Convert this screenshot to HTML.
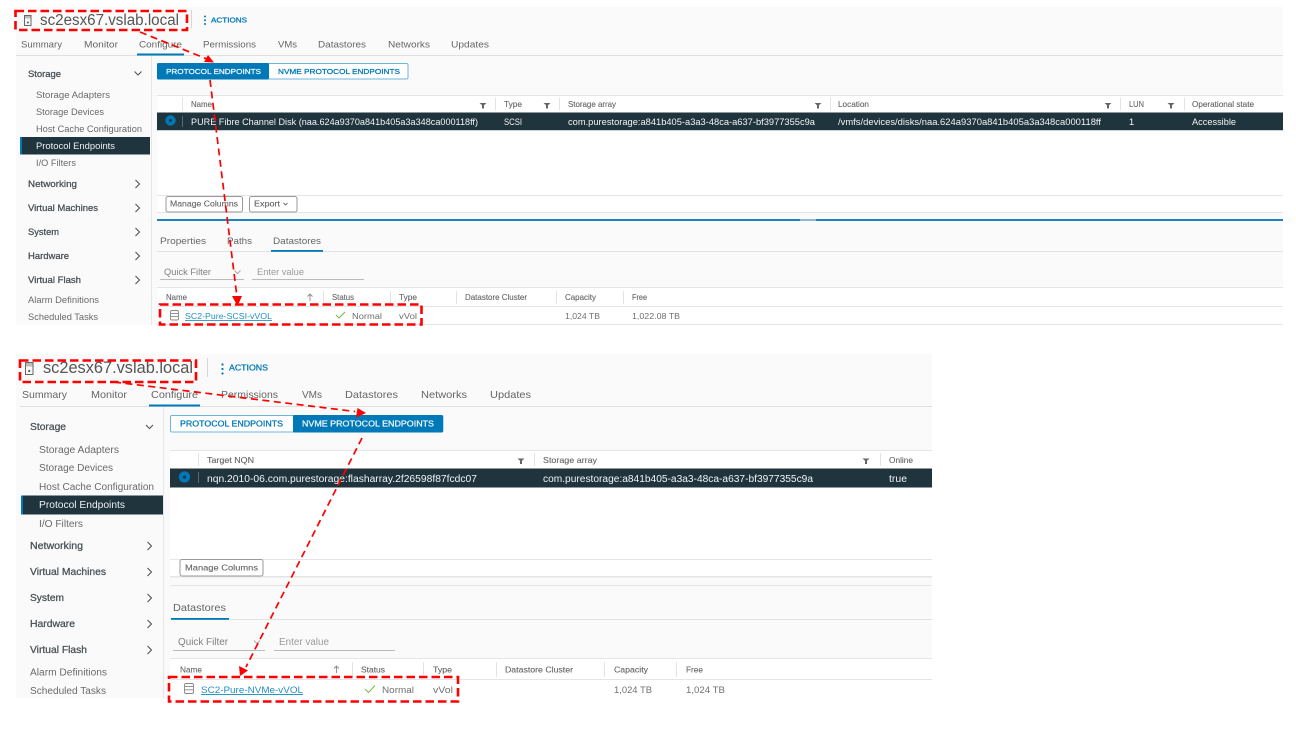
<!DOCTYPE html>
<html lang="en">
<head>
<meta charset="utf-8">
<title>Protocol Endpoints</title>
<style>
html,body{margin:0;padding:0;background:#fff;width:1296px;height:733px;overflow:hidden}
svg{display:block;filter:blur(.35px)}
text{font-family:"Liberation Sans",sans-serif;fill:#666;white-space:pre}
.n{font-size:9.5px}.N{font-size:10.5px}
.s{font-size:9px;fill:#6a6a6a}.S{font-size:10px;fill:#6a6a6a}
.b{font-size:9.2px;fill:#4a5257;stroke:#4a5257;stroke-width:.28px}.B{font-size:10.2px;fill:#4a5257;stroke:#4a5257;stroke-width:.28px}
.h{font-size:8px;fill:#666;stroke:#666;stroke-width:.12px}.H{font-size:8.5px;fill:#666;stroke:#666;stroke-width:.12px}
.w{font-size:9.3px;fill:#f2f5f6}.W{font-size:10px;fill:#f2f5f6}
.c{font-size:8.5px;fill:#707070}.C{font-size:9.5px;fill:#707070}
.btn{font-size:7.4px;stroke-width:.28px}.BTN{font-size:8.1px;stroke-width:.28px}
.blue{fill:#0079b8;stroke:#0079b8}.lite{fill:#eaf4f9;stroke:#eaf4f9}
.l{stroke:#e3e5e6;stroke-width:1;fill:none}
.sep{stroke:#e1e4e5;stroke-width:1}
.ch{stroke:#555;stroke-width:1.1;fill:none}
.red{stroke:#f00;stroke-width:2.6;fill:none;stroke-dasharray:8.500 4}
.redt{stroke:#f00;stroke-width:1.7;fill:none;stroke-dasharray:7 4.500}
</style>
</head>
<body>
<svg width="1296" height="733" viewBox="0 0 1296 733" xmlns="http://www.w3.org/2000/svg">
<defs>
<path id="f" d="M-3.5-2.5H3.5L1-.2V3H-1V-.2Z" fill="#666"/>
<path id="cr" d="M-2-4L2 0L-2 4" class="ch"/>
</defs>

<!-- PANEL 1 -->
<rect x="16" y="7" width="1267" height="318" fill="#fafafa"/>
<line x1="16" y1="55.500" x2="1283" y2="55.500" stroke="#dde0e2"/>
<line x1="151.500" y1="56" x2="151.500" y2="325" stroke="#e4e6e7"/>

<rect x="24.500" y="15.500" width="6.500" height="3" fill="#bbb"/>
<rect x="24.500" y="15.500" width="6.500" height="10" fill="none" stroke="#666"/>
<circle cx="27.800" cy="22.500" r="1" fill="#555"/>
<text x="40" y="25" style="font-size:15.500px;fill:#555" textLength="139" lengthAdjust="spacingAndGlyphs">sc2esx67.vslab.local</text>
<line x1="191.500" y1="10" x2="191.500" y2="28" stroke="#d5d8da"/>
<g fill="#0079b8"><circle cx="205" cy="16.500" r="1"/><circle cx="205" cy="20.300" r="1"/><circle cx="205" cy="24" r="1"/></g>
<text x="211" y="22.500" class="btn blue" textLength="36" lengthAdjust="spacingAndGlyphs">ACTIONS</text>

<text x="21" y="47.500" class="n" textLength="41" lengthAdjust="spacingAndGlyphs">Summary</text>
<text x="84" y="47.500" class="n" textLength="34" lengthAdjust="spacingAndGlyphs">Monitor</text>
<text x="139" y="47.500" class="n" textLength="43" lengthAdjust="spacingAndGlyphs">Configure</text>
<text x="203" y="47.500" class="n" textLength="53" lengthAdjust="spacingAndGlyphs">Permissions</text>
<text x="278" y="47.500" class="n" textLength="19" lengthAdjust="spacingAndGlyphs">VMs</text>
<text x="318" y="47.500" class="n" textLength="48" lengthAdjust="spacingAndGlyphs">Datastores</text>
<text x="388" y="47.500" class="n" textLength="42" lengthAdjust="spacingAndGlyphs">Networks</text>
<text x="451" y="47.500" class="n" textLength="38" lengthAdjust="spacingAndGlyphs">Updates</text>
<rect x="137" y="53.500" width="47" height="2" fill="#0079b8"/>

<text x="28" y="77" class="b" textLength="33" lengthAdjust="spacingAndGlyphs">Storage</text>
<path d="M134.500 71.500L138 75L141.500 71.500" class="ch"/>
<text x="36" y="98" class="s" textLength="74" lengthAdjust="spacingAndGlyphs">Storage Adapters</text>
<text x="36" y="115" class="s" textLength="68" lengthAdjust="spacingAndGlyphs">Storage Devices</text>
<text x="36" y="132" class="s" textLength="106" lengthAdjust="spacingAndGlyphs">Host Cache Configuration</text>
<rect x="20" y="137" width="130" height="17.500" fill="#20343e"/>
<rect x="20" y="137" width="2" height="17.500" fill="#0079b8"/>
<text x="36" y="149" class="s" style="fill:#eef1f2" textLength="79" lengthAdjust="spacingAndGlyphs">Protocol Endpoints</text>
<text x="36" y="166" class="s" textLength="40" lengthAdjust="spacingAndGlyphs">I/O Filters</text>
<text x="28" y="187" class="b" textLength="49" lengthAdjust="spacingAndGlyphs">Networking</text>
<text x="28" y="211" class="b" textLength="70" lengthAdjust="spacingAndGlyphs">Virtual Machines</text>
<text x="28" y="235" class="b" textLength="31" lengthAdjust="spacingAndGlyphs">System</text>
<text x="28" y="259" class="b" textLength="41" lengthAdjust="spacingAndGlyphs">Hardware</text>
<text x="28" y="283" class="b" textLength="53" lengthAdjust="spacingAndGlyphs">Virtual Flash</text>
<text x="28" y="303" class="s" textLength="71" lengthAdjust="spacingAndGlyphs">Alarm Definitions</text>
<text x="28" y="320" class="s" textLength="70" lengthAdjust="spacingAndGlyphs">Scheduled Tasks</text>
<use href="#cr" x="137.500" y="184"/><use href="#cr" x="137.500" y="208"/><use href="#cr" x="137.500" y="232"/><use href="#cr" x="137.500" y="256"/><use href="#cr" x="137.500" y="280"/>

<rect x="157.500" y="63.500" width="250.500" height="15.500" rx="1.500" fill="#fff" stroke="#6fb5d8"/>
<rect x="157" y="63" width="112" height="16.500" rx="1.500" fill="#0079b8"/>
<text x="166" y="74" class="btn lite" textLength="95" lengthAdjust="spacingAndGlyphs">PROTOCOL ENDPOINTS</text>
<text x="278" y="74" class="btn blue" textLength="122" lengthAdjust="spacingAndGlyphs">NVME PROTOCOL ENDPOINTS</text>

<rect x="157" y="96" width="1126" height="116" fill="#fff"/>
<line x1="157" y1="95.500" x2="1283" y2="95.500" class="l"/>
<line x1="157" y1="195.500" x2="1283" y2="195.500" class="l"/>
<line x1="157" y1="212.500" x2="1283" y2="212.500" class="l"/>
<rect x="157" y="219" width="1126" height="2" fill="#1d84bd"/>
<rect x="800" y="219" width="16" height="2" fill="#8fb9d2"/>

<text x="191" y="107" class="h" textLength="21" lengthAdjust="spacingAndGlyphs">Name</text>
<text x="504" y="107" class="h" textLength="18" lengthAdjust="spacingAndGlyphs">Type</text>
<text x="568" y="107" class="h" textLength="48" lengthAdjust="spacingAndGlyphs">Storage array</text>
<text x="838" y="107" class="h" textLength="31" lengthAdjust="spacingAndGlyphs">Location</text>
<text x="1129" y="107" class="h" textLength="15" lengthAdjust="spacingAndGlyphs">LUN</text>
<text x="1192" y="107" class="h" textLength="62" lengthAdjust="spacingAndGlyphs">Operational state</text>
<line x1="182.500" y1="98" x2="182.500" y2="110" class="sep"/><line x1="495.500" y1="98" x2="495.500" y2="110" class="sep"/><line x1="559.500" y1="98" x2="559.500" y2="110" class="sep"/><line x1="830.500" y1="98" x2="830.500" y2="110" class="sep"/><line x1="1120.500" y1="98" x2="1120.500" y2="110" class="sep"/><line x1="1184.500" y1="98" x2="1184.500" y2="110" class="sep"/>
<use href="#f" x="483" y="105.500"/><use href="#f" x="547" y="105.500"/><use href="#f" x="818" y="105.500"/><use href="#f" x="1108" y="105.500"/><use href="#f" x="1171" y="105.500"/>

<rect x="157" y="112.500" width="1126" height="17.500" fill="#20343e"/>
<rect x="157" y="130" width="1126" height="1" fill="#c9d0d4"/>
<circle cx="170.500" cy="120.500" r="5.200" fill="#0079b8"/><circle cx="170.500" cy="120.500" r="1.500" fill="#16384a"/>
<line x1="182.500" y1="116" x2="182.500" y2="127" stroke="#5a6a72"/>
<text x="191" y="125" class="w" textLength="287" lengthAdjust="spacingAndGlyphs">PURE Fibre Channel Disk (naa.624a9370a841b405a3a348ca000118ff)</text>
<text x="504" y="125" class="w" textLength="18" lengthAdjust="spacingAndGlyphs">SCSI</text>
<text x="568" y="125" class="w" textLength="247" lengthAdjust="spacingAndGlyphs">com.purestorage:a841b405-a3a3-48ca-a637-bf3977355c9a</text>
<text x="838" y="125" class="w" textLength="263" lengthAdjust="spacingAndGlyphs">/vmfs/devices/disks/naa.624a9370a841b405a3a348ca000118ff</text>
<text x="1129" y="125" class="w">1</text>
<text x="1192" y="125" class="w" textLength="44" lengthAdjust="spacingAndGlyphs">Accessible</text>

<rect x="166" y="196.500" width="76.500" height="15.500" rx="2" fill="#fff" stroke="#999"/>
<text x="170" y="206.500" class="h" textLength="68" lengthAdjust="spacingAndGlyphs">Manage Columns</text>
<rect x="249.500" y="196.500" width="47.500" height="15.500" rx="2" fill="#fff" stroke="#999"/>
<text x="254" y="206.500" class="h" textLength="26" lengthAdjust="spacingAndGlyphs">Export</text>
<path d="M283.500 203L285.500 205L287.500 203" stroke="#666" stroke-width=".9" fill="none"/>

<text x="160" y="244" class="n" textLength="46" lengthAdjust="spacingAndGlyphs">Properties</text>
<text x="227" y="244" class="n" textLength="25" lengthAdjust="spacingAndGlyphs">Paths</text>
<text x="273" y="244" class="n" textLength="48" lengthAdjust="spacingAndGlyphs">Datastores</text>
<line x1="157" y1="251.500" x2="1283" y2="251.500" stroke="#e0e2e3"/>
<rect x="271" y="250" width="52" height="1.800" fill="#0079b8"/>

<text x="164" y="275" class="s" style="fill:#808080" textLength="47" lengthAdjust="spacingAndGlyphs">Quick Filter</text>
<path d="M234.500 270.500L237.500 273.500L240.500 270.500" stroke="#aaa" fill="none"/>
<line x1="160" y1="279.500" x2="244" y2="279.500" stroke="#bbb"/>
<text x="257" y="275" class="s" style="fill:#9a9a9a" textLength="47" lengthAdjust="spacingAndGlyphs">Enter value</text>
<line x1="252" y1="279.500" x2="364" y2="279.500" stroke="#bbb"/>

<rect x="157" y="288" width="1126" height="37" fill="#fff"/>
<line x1="157" y1="287.500" x2="1283" y2="287.500" class="l"/>
<line x1="157" y1="306.500" x2="1283" y2="306.500" class="l"/>
<line x1="157" y1="324.500" x2="1283" y2="324.500" class="l"/>
<text x="166" y="300" class="h" textLength="21" lengthAdjust="spacingAndGlyphs">Name</text>
<text x="332" y="300" class="h" textLength="22" lengthAdjust="spacingAndGlyphs">Status</text>
<text x="399" y="300" class="h" textLength="18" lengthAdjust="spacingAndGlyphs">Type</text>
<text x="465" y="300" class="h" textLength="62" lengthAdjust="spacingAndGlyphs">Datastore Cluster</text>
<text x="565" y="300" class="h" textLength="31" lengthAdjust="spacingAndGlyphs">Capacity</text>
<text x="632" y="300" class="h" textLength="15" lengthAdjust="spacingAndGlyphs">Free</text>
<path d="M310 301V294M307.500 296.500L310 294L312.500 296.500" stroke="#888" fill="none" stroke-width=".9"/>
<line x1="323.500" y1="291" x2="323.500" y2="304" class="sep"/><line x1="390.500" y1="291" x2="390.500" y2="304" class="sep"/><line x1="456.500" y1="291" x2="456.500" y2="304" class="sep"/><line x1="556.500" y1="291" x2="556.500" y2="304" class="sep"/><line x1="623.500" y1="291" x2="623.500" y2="304" class="sep"/>
<g fill="none" stroke="#888" stroke-width=".9"><rect x="170.500" y="310.500" width="8" height="9.500" rx="1.500"/><line x1="170.500" y1="313.500" x2="178.500" y2="313.500"/><line x1="170.500" y1="316.500" x2="178.500" y2="316.500"/></g>
<text x="185" y="319" class="c" style="fill:#1f8fc4;text-decoration:underline" textLength="87" lengthAdjust="spacingAndGlyphs">SC2-Pure-SCSI-vVOL</text>
<path d="M336 315L339 318L345 312" stroke="#7ab648" stroke-width="1" fill="none"/>
<text x="352" y="319" class="c" textLength="30" lengthAdjust="spacingAndGlyphs">Normal</text>
<text x="399" y="319" class="c" textLength="18" lengthAdjust="spacingAndGlyphs">vVol</text>
<text x="565" y="319" class="c" textLength="35" lengthAdjust="spacingAndGlyphs">1,024 TB</text>
<text x="632" y="319" class="c" textLength="48" lengthAdjust="spacingAndGlyphs">1,022.08 TB</text>

<!-- PANEL 2 -->
<rect x="16" y="354" width="916" height="344" fill="#fafafa"/>
<line x1="20" y1="406.500" x2="932" y2="406.500" stroke="#dde0e2"/>
<line x1="163.500" y1="407" x2="163.500" y2="698" stroke="#e4e6e7"/>

<rect x="25.500" y="362.500" width="7.500" height="4" fill="#bbb"/>
<rect x="25.500" y="362.500" width="7.500" height="12" fill="none" stroke="#666"/>
<circle cx="29.200" cy="371" r="1.100" fill="#555"/>
<text x="43" y="373" style="font-size:16.700px;fill:#555" textLength="150" lengthAdjust="spacingAndGlyphs">sc2esx67.vslab.local</text>
<line x1="207.500" y1="358" x2="207.500" y2="377" stroke="#d5d8da"/>
<g fill="#0079b8"><circle cx="222.500" cy="364.500" r="1.100"/><circle cx="222.500" cy="369" r="1.100"/><circle cx="222.500" cy="373.500" r="1.100"/></g>
<text x="229" y="370.500" class="BTN blue" textLength="39" lengthAdjust="spacingAndGlyphs">ACTIONS</text>

<text x="22" y="398" class="N" textLength="45" lengthAdjust="spacingAndGlyphs">Summary</text>
<text x="91" y="398" class="N" textLength="36" lengthAdjust="spacingAndGlyphs">Monitor</text>
<text x="151" y="398" class="N" textLength="47" lengthAdjust="spacingAndGlyphs">Configure</text>
<text x="221" y="398" class="N" textLength="57" lengthAdjust="spacingAndGlyphs">Permissions</text>
<text x="302" y="398" class="N" textLength="20" lengthAdjust="spacingAndGlyphs">VMs</text>
<text x="345" y="398" class="N" textLength="53" lengthAdjust="spacingAndGlyphs">Datastores</text>
<text x="421" y="398" class="N" textLength="46" lengthAdjust="spacingAndGlyphs">Networks</text>
<text x="490" y="398" class="N" textLength="41" lengthAdjust="spacingAndGlyphs">Updates</text>
<rect x="149" y="404.500" width="51" height="2" fill="#0079b8"/>

<text x="30" y="430" class="B" textLength="36" lengthAdjust="spacingAndGlyphs">Storage</text>
<path d="M146 425L149.500 428.500L153 425" class="ch"/>
<text x="39" y="453" class="S" textLength="80" lengthAdjust="spacingAndGlyphs">Storage Adapters</text>
<text x="39" y="471" class="S" textLength="74" lengthAdjust="spacingAndGlyphs">Storage Devices</text>
<text x="39" y="490" class="S" textLength="115" lengthAdjust="spacingAndGlyphs">Host Cache Configuration</text>
<rect x="21" y="495.500" width="142" height="19" fill="#20343e"/>
<rect x="21" y="495.500" width="2" height="19" fill="#0079b8"/>
<text x="39" y="508" class="S" style="fill:#eef1f2" textLength="86" lengthAdjust="spacingAndGlyphs">Protocol Endpoints</text>
<text x="39" y="527" class="S" textLength="44" lengthAdjust="spacingAndGlyphs">I/O Filters</text>
<text x="30" y="549" class="B" textLength="53" lengthAdjust="spacingAndGlyphs">Networking</text>
<text x="30" y="575" class="B" textLength="76" lengthAdjust="spacingAndGlyphs">Virtual Machines</text>
<text x="30" y="601" class="B" textLength="34" lengthAdjust="spacingAndGlyphs">System</text>
<text x="30" y="627" class="B" textLength="45" lengthAdjust="spacingAndGlyphs">Hardware</text>
<text x="30" y="653" class="B" textLength="57" lengthAdjust="spacingAndGlyphs">Virtual Flash</text>
<text x="30" y="675.500" class="S" textLength="77" lengthAdjust="spacingAndGlyphs">Alarm Definitions</text>
<text x="30" y="694" class="S" textLength="76" lengthAdjust="spacingAndGlyphs">Scheduled Tasks</text>
<use href="#cr" x="149.500" y="546"/><use href="#cr" x="149.500" y="572"/><use href="#cr" x="149.500" y="598"/><use href="#cr" x="149.500" y="624"/><use href="#cr" x="149.500" y="650"/>

<rect x="170.500" y="415.500" width="272.500" height="16.500" rx="1.500" fill="#fff" stroke="#6fb5d8"/>
<rect x="293" y="415" width="150" height="17.500" rx="1.500" fill="#0079b8"/>
<text x="180" y="426.500" class="BTN blue" textLength="103" lengthAdjust="spacingAndGlyphs">PROTOCOL ENDPOINTS</text>
<text x="302" y="426.500" class="BTN lite" textLength="132" lengthAdjust="spacingAndGlyphs">NVME PROTOCOL ENDPOINTS</text>

<rect x="170" y="450" width="762" height="127" fill="#fff"/>
<line x1="170" y1="450.500" x2="932" y2="450.500" class="l"/>
<line x1="170" y1="559.500" x2="932" y2="559.500" class="l"/>
<rect x="170" y="576" width="762" height="1.500" fill="#e3e5e6"/>
<line x1="170" y1="585.500" x2="932" y2="585.500" class="l"/>

<text x="207" y="463" class="H" textLength="47" lengthAdjust="spacingAndGlyphs">Target NQN</text>
<text x="543" y="463" class="H" textLength="54" lengthAdjust="spacingAndGlyphs">Storage array</text>
<text x="889" y="463" class="H" textLength="24" lengthAdjust="spacingAndGlyphs">Online</text>
<line x1="198.500" y1="453" x2="198.500" y2="466" class="sep"/><line x1="534.500" y1="453" x2="534.500" y2="466" class="sep"/><line x1="880.500" y1="453" x2="880.500" y2="466" class="sep"/>
<use href="#f" x="521" y="461"/><use href="#f" x="866" y="461"/>

<rect x="170" y="468.500" width="762" height="19" fill="#20343e"/>
<circle cx="184.500" cy="477" r="5.600" fill="#0079b8"/><circle cx="184.500" cy="477" r="1.600" fill="#16384a"/>
<line x1="198.500" y1="472" x2="198.500" y2="483" stroke="#5a6a72"/>
<text x="207" y="482" class="W" textLength="270" lengthAdjust="spacingAndGlyphs">nqn.2010-06.com.purestorage:flasharray.2f26598f87fcdc07</text>
<text x="543" y="482" class="W" textLength="270" lengthAdjust="spacingAndGlyphs">com.purestorage:a841b405-a3a3-48ca-a637-bf3977355c9a</text>
<text x="889" y="482" class="W" textLength="18" lengthAdjust="spacingAndGlyphs">true</text>

<rect x="180" y="559.500" width="83" height="16.500" rx="2" fill="#fff" stroke="#999"/>
<text x="185" y="570.500" class="H" textLength="73" lengthAdjust="spacingAndGlyphs">Manage Columns</text>

<text x="173" y="611" class="N" textLength="53" lengthAdjust="spacingAndGlyphs">Datastores</text>
<line x1="170" y1="619.500" x2="932" y2="619.500" stroke="#e0e2e3"/>
<rect x="171" y="618" width="58" height="1.800" fill="#0079b8"/>

<text x="178" y="645" class="S" style="fill:#808080" textLength="50" lengthAdjust="spacingAndGlyphs">Quick Filter</text>
<path d="M254 640.500L257 643.500L260 640.500" stroke="#aaa" fill="none"/>
<line x1="173" y1="650.500" x2="265" y2="650.500" stroke="#bbb"/>
<text x="279" y="645" class="S" style="fill:#9a9a9a" textLength="50" lengthAdjust="spacingAndGlyphs">Enter value</text>
<line x1="274" y1="650.500" x2="395" y2="650.500" stroke="#bbb"/>

<rect x="170" y="658" width="762" height="40" fill="#fff"/>
<line x1="170" y1="658.500" x2="932" y2="658.500" class="l"/>
<line x1="170" y1="679.500" x2="932" y2="679.500" class="l"/>
<text x="180" y="672.500" class="H" textLength="22" lengthAdjust="spacingAndGlyphs">Name</text>
<text x="361" y="672.500" class="H" textLength="24" lengthAdjust="spacingAndGlyphs">Status</text>
<text x="433" y="672.500" class="H" textLength="19" lengthAdjust="spacingAndGlyphs">Type</text>
<text x="505" y="672.500" class="H" textLength="68" lengthAdjust="spacingAndGlyphs">Datastore Cluster</text>
<text x="614" y="672.500" class="H" textLength="34" lengthAdjust="spacingAndGlyphs">Capacity</text>
<text x="686" y="672.500" class="H" textLength="17" lengthAdjust="spacingAndGlyphs">Free</text>
<path d="M336.500 673V666M334 668.500L336.500 666L339 668.500" stroke="#888" fill="none" stroke-width=".9"/>
<line x1="352.500" y1="662" x2="352.500" y2="677" class="sep"/><line x1="423.500" y1="662" x2="423.500" y2="677" class="sep"/><line x1="496.500" y1="662" x2="496.500" y2="677" class="sep"/><line x1="604.500" y1="662" x2="604.500" y2="677" class="sep"/><line x1="676.500" y1="662" x2="676.500" y2="677" class="sep"/>
<g fill="none" stroke="#888" stroke-width=".9"><rect x="184.500" y="683.500" width="9" height="10" rx="1.500"/><line x1="184.500" y1="686.500" x2="193.500" y2="686.500"/><line x1="184.500" y1="689.800" x2="193.500" y2="689.800"/></g>
<text x="201" y="693" class="C" style="fill:#1f8fc4;text-decoration:underline" textLength="102" lengthAdjust="spacingAndGlyphs">SC2-Pure-NVMe-vVOL</text>
<path d="M365 689L368.500 692.500L375 685.500" stroke="#7ab648" stroke-width="1" fill="none"/>
<text x="382" y="693" class="C" textLength="32" lengthAdjust="spacingAndGlyphs">Normal</text>
<text x="433" y="693" class="C" textLength="20" lengthAdjust="spacingAndGlyphs">vVol</text>
<text x="614" y="693" class="C" textLength="38" lengthAdjust="spacingAndGlyphs">1,024 TB</text>
<text x="686" y="693" class="C" textLength="39" lengthAdjust="spacingAndGlyphs">1,024 TB</text>

<!-- RED ANNOTATIONS -->
<rect x="15.500" y="11" width="171.500" height="19" class="red"/>
<path d="M140 32L207 59" class="redt"/>
<path d="M214 62.500L204 62L208 55Z" fill="#f00"/>
<path d="M210 80L237 297" class="redt"/>
<path d="M237.500 306L232 296H242Z" fill="#f00"/>
<rect x="160" y="304.500" width="261.500" height="20" class="red"/>

<rect x="20" y="360.500" width="176" height="21.500" class="red"/>
<path d="M114 382L355 411.500" class="redt"/>
<path d="M366 413L356 417.500L357.500 408Z" fill="#f00"/>
<path d="M362 438L246 667" class="redt"/>
<path d="M240 676L239 666L248 670.500Z" fill="#f00"/>
<rect x="169" y="677" width="289" height="24.500" class="red"/>
</svg>
</body>
</html>
